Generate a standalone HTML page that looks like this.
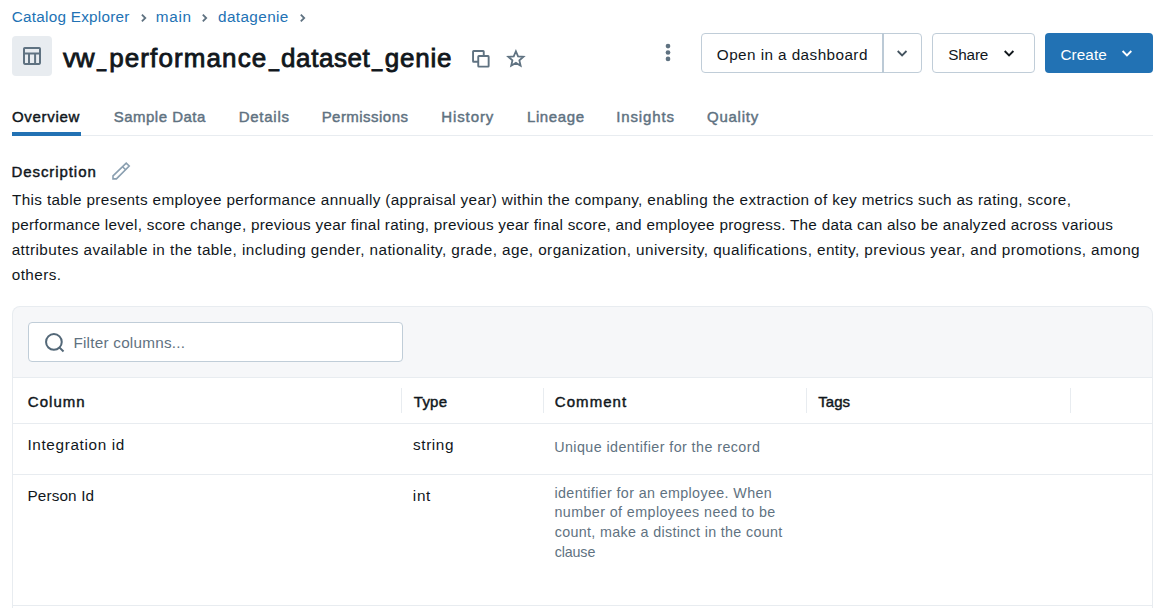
<!DOCTYPE html>
<html lang="en"><head><meta charset="utf-8"><title>Catalog Explorer</title>
<style>
html,body{margin:0;padding:0;background:#fff;}
body{width:1166px;height:608px;position:relative;overflow:hidden;font-family:"Liberation Sans", sans-serif;}
.t{position:absolute;white-space:pre;line-height:1;margin:0;padding:0;font-weight:400;}
.ttl{position:absolute;white-space:nowrap;line-height:1;margin:0;padding:0;font-weight:400;}
.ti{display:inline-block;position:relative;white-space:pre;line-height:1;}
.b{position:absolute;box-sizing:border-box;}
svg{position:absolute;overflow:visible;}
</style></head><body>
<!-- title icon box -->
<div class="b" style="left:12px;top:36px;width:40px;height:40px;background:#e8ecf0;border-radius:4px"></div>
<svg style="left:0;top:0" width="1166" height="608" viewBox="0 0 1166 608" fill="none">
  <!-- table icon -->
  <g stroke="#5f7281" stroke-width="2" fill="none">
    <rect x="24" y="47.9" width="16" height="16" rx="0.8"/>
    <path d="M24 53.5H40M29 53.5V63.9M35.1 53.5V63.9"/>
  </g>
  <!-- breadcrumb chevrons -->
  <g stroke="#5f7281" stroke-width="1.8" fill="none">
    <path d="M141.9 14.6L145.3 18L141.9 21.4"/>
    <path d="M202.8 14.6L206.2 18L202.8 21.4"/>
    <path d="M300.8 14.6L304.2 18L300.8 21.4"/>
  </g>
  <!-- copy icon -->
  <g stroke="#5f7281" stroke-width="1.9" fill="#fff">
    <rect x="473.05" y="50.95" width="10.7" height="10.8" rx="0.6"/>
    <rect x="478.25" y="56.05" width="10.4" height="10.6" rx="0.6"/>
  </g>
  <!-- star -->
  <path id="star" stroke="#5f7281" stroke-width="1.8" fill="none" stroke-linejoin="miter" d="M515.90 51.25L518.05 56.30L523.51 56.78L519.37 60.38L520.60 65.72L515.90 62.90L511.20 65.72L512.43 60.38L508.29 56.78L513.75 56.30Z"/>
  <!-- kebab -->
  <g fill="#5f7281">
    <circle cx="668" cy="46.1" r="2.35"/><circle cx="668" cy="52.5" r="2.35"/><circle cx="668" cy="58.9" r="2.35"/>
  </g>
  <!-- pencil -->
  <g stroke="#8a9fb0" stroke-width="1.6" fill="none" stroke-linejoin="miter">
    <path d="M113 178.9V175.9L126.2 163.1L129.2 166L116.4 178.9Z"/>
    <path d="M122.5 166.7L125.7 169.8"/>
  </g>
</svg>
<!-- buttons -->
<div class="b" style="left:701px;top:33px;width:221px;height:40px;border:1px solid #c0cdd8;border-radius:4px;background:#fff"></div>
<div class="b" style="left:882.1px;top:33px;width:1.7px;height:40px;background:#bccad6"></div>
<div class="b" style="left:932px;top:33px;width:103px;height:40px;border:1px solid #c0cdd8;border-radius:4px;background:#fff"></div>
<div class="b" style="left:1045px;top:33px;width:108px;height:40px;border-radius:4px;background:#2272b4"></div>
<!-- tabs -->
<div class="b" style="left:12px;top:135px;width:1141px;height:1px;background:#e8ecf0"></div>
<div class="b" style="left:12px;top:132px;width:69px;height:4px;background:#2272b4"></div>
<!-- panel -->
<div class="b" style="left:12px;top:306px;width:1141px;height:302px;border:1px solid #e8ecf0;border-bottom:none;border-radius:8px 8px 0 0;background:#f6f7f9"></div>
<div class="b" style="left:13px;top:377px;width:1139px;height:231px;background:#fff;border-top:1px solid #e8ecf0"></div>
<div class="b" style="left:28px;top:322px;width:375px;height:40px;border:1px solid #c0cdd8;border-radius:4px;background:#fff"></div>
<div class="b" style="left:13px;top:423px;width:1139px;height:1px;background:#e8ecf0"></div>
<div class="b" style="left:13px;top:474px;width:1139px;height:1px;background:#e8ecf0"></div>
<div class="b" style="left:13px;top:605px;width:1139px;height:1px;background:#e8ecf0"></div>
<!-- header separators -->
<div class="b" style="left:401px;top:388px;width:1.3px;height:25px;background:#e8ecf0"></div>
<div class="b" style="left:542.5px;top:388px;width:1.3px;height:25px;background:#e8ecf0"></div>
<div class="b" style="left:806px;top:388px;width:1.3px;height:25px;background:#e8ecf0"></div>
<div class="b" style="left:1069.5px;top:388px;width:1.3px;height:25px;background:#e8ecf0"></div>
<svg style="left:0;top:0" width="1166" height="608" viewBox="0 0 1166 608" fill="none">
  <!-- chevrons over buttons -->
  <path d="M897.7 51L902.1 55.4L906.5 51" stroke="#44535f" stroke-width="1.8"/>
  <path d="M1004.7 51L1009.05 55.35L1013.4 51" stroke="#11171c" stroke-width="1.9"/>
  <path d="M1122.6 51L1126.95 55.35L1131.3 51" stroke="#ffffff" stroke-width="1.9"/>
  <!-- search -->
  <g stroke="#536878" stroke-width="2" fill="none">
    <circle cx="53.9" cy="341.95" r="7.85"/>
    <path d="M59.6 347.6L63.5 351.5"/>
  </g>
</svg>
<span class="t" style="left:11.70px;top:8.75px;font-size:15.3px;color:#2272b4;letter-spacing:0.254px">Catalog Explorer</span>
<span class="t" style="left:155.85px;top:8.75px;font-size:15.3px;color:#2272b4;letter-spacing:0.681px">main</span>
<span class="t" style="left:218.00px;top:8.75px;font-size:15.3px;color:#2272b4;letter-spacing:0.393px">datagenie</span>
<h1 class="ttl" style="left:62.95px;top:44.59px;font-size:26px;color:#11171c;-webkit-text-stroke:0.85px #11171c"><span class="ti" style="letter-spacing:-0.200px;width:34.55px;">vw</span><span class="ti" style="transform-origin:0 0;transform:scaleX(0.630);letter-spacing:0.000px;width:11.70px;top:-0.30px;">_</span><span class="ti" style="letter-spacing:1.108px;width:160.15px;">performance</span><span class="ti" style="transform-origin:0 0;transform:scaleX(0.692);letter-spacing:0.000px;width:11.80px;top:-0.30px;">_</span><span class="ti" style="letter-spacing:0.551px;width:90.80px;">dataset</span><span class="ti" style="transform-origin:0 0;transform:scaleX(0.705);letter-spacing:0.000px;width:12.75px;top:-0.30px;">_</span><span class="ti" style="letter-spacing:0.781px;">genie</span></h1>
<span class="t" style="left:11.95px;top:109.30px;font-size:15.0px;color:#11171c;letter-spacing:0.691px;-webkit-text-stroke:0.45px #11171c">Overview</span>
<span class="t" style="left:113.75px;top:109.30px;font-size:15.0px;color:#5f7281;letter-spacing:0.483px;-webkit-text-stroke:0.45px #5f7281">Sample Data</span>
<span class="t" style="left:238.65px;top:109.30px;font-size:15.0px;color:#5f7281;letter-spacing:0.757px;-webkit-text-stroke:0.45px #5f7281">Details</span>
<span class="t" style="left:321.65px;top:109.30px;font-size:15.0px;color:#5f7281;letter-spacing:0.461px;-webkit-text-stroke:0.45px #5f7281">Permissions</span>
<span class="t" style="left:441.25px;top:109.30px;font-size:15.0px;color:#5f7281;letter-spacing:0.896px;-webkit-text-stroke:0.45px #5f7281">History</span>
<span class="t" style="left:526.95px;top:109.30px;font-size:15.0px;color:#5f7281;letter-spacing:0.618px;-webkit-text-stroke:0.45px #5f7281">Lineage</span>
<span class="t" style="left:616.20px;top:109.30px;font-size:15.0px;color:#5f7281;letter-spacing:0.878px;-webkit-text-stroke:0.45px #5f7281">Insights</span>
<span class="t" style="left:706.95px;top:109.30px;font-size:15.0px;color:#5f7281;letter-spacing:0.777px;-webkit-text-stroke:0.45px #5f7281">Quality</span>
<span class="t" style="left:716.85px;top:46.85px;font-size:15.3px;color:#11171c;letter-spacing:0.426px">Open in a dashboard</span>
<span class="t" style="left:948.35px;top:46.85px;font-size:15.3px;color:#11171c;letter-spacing:-0.220px">Share</span>
<span class="t" style="left:1060.40px;top:46.85px;font-size:15.3px;color:#ffffff;letter-spacing:0.096px">Create</span>
<span class="t" style="left:11.45px;top:164.30px;font-size:15.0px;color:#11171c;letter-spacing:0.927px;-webkit-text-stroke:0.45px #11171c">Description</span>
<span class="t" style="left:11.95px;top:192.05px;font-size:15.3px;color:#11171c;letter-spacing:0.358px">This table presents employee performance annually (appraisal year) within the company, enabling the extraction of key metrics such as rating, score,</span>
<span class="t" style="left:11.45px;top:217.05px;font-size:15.3px;color:#11171c;letter-spacing:0.275px">performance level, score change, previous year final rating, previous year final score, and employee progress. The data can also be analyzed across various</span>
<span class="t" style="left:11.70px;top:242.05px;font-size:15.3px;color:#11171c;letter-spacing:0.430px">attributes available in the table, including gender, nationality, grade, age, organization, university, qualifications, entity, previous year, and promotions, among</span>
<span class="t" style="left:11.70px;top:267.05px;font-size:15.3px;color:#11171c;letter-spacing:0.431px">others.</span>
<span class="t" style="left:73.40px;top:335.05px;font-size:15.3px;color:#5f7281;letter-spacing:0.231px">Filter columns...</span>
<span class="t" style="left:27.85px;top:394.40px;font-size:15.0px;color:#11171c;letter-spacing:1.012px;-webkit-text-stroke:0.45px #11171c">Column</span>
<span class="t" style="left:413.85px;top:394.40px;font-size:15.0px;color:#11171c;letter-spacing:0.223px;-webkit-text-stroke:0.45px #11171c">Type</span>
<span class="t" style="left:554.80px;top:394.40px;font-size:15.0px;color:#11171c;letter-spacing:1.061px;-webkit-text-stroke:0.45px #11171c">Comment</span>
<span class="t" style="left:818.20px;top:394.40px;font-size:15.0px;color:#11171c;letter-spacing:0.054px;-webkit-text-stroke:0.45px #11171c">Tags</span>
<span class="t" style="left:27.40px;top:437.05px;font-size:15.3px;color:#11171c;letter-spacing:0.654px">Integration id</span>
<span class="t" style="left:413.00px;top:437.05px;font-size:15.3px;color:#11171c;letter-spacing:0.619px">string</span>
<span class="t" style="left:554.20px;top:439.80px;font-size:14.3px;color:#5f7281;letter-spacing:0.431px">Unique identifier for the record</span>
<span class="t" style="left:27.40px;top:487.65px;font-size:15.3px;color:#11171c;letter-spacing:0.146px">Person Id</span>
<span class="t" style="left:412.85px;top:487.65px;font-size:15.3px;color:#11171c;letter-spacing:0.672px">int</span>
<span class="t" style="left:554.45px;top:485.50px;font-size:14.3px;color:#5f7281;letter-spacing:0.370px">identifier for an employee. When</span>
<span class="t" style="left:554.45px;top:505.40px;font-size:14.3px;color:#5f7281;letter-spacing:0.408px">number of employees need to be</span>
<span class="t" style="left:554.70px;top:525.30px;font-size:14.3px;color:#5f7281;letter-spacing:0.336px">count, make a distinct in the count</span>
<span class="t" style="left:554.70px;top:545.20px;font-size:14.3px;color:#5f7281;letter-spacing:-0.136px">clause</span>
</body></html>
